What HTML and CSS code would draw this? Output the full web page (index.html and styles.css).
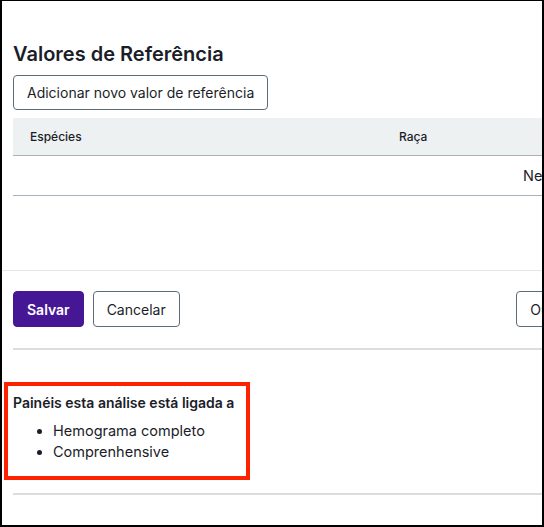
FILE: index.html
```html
<!DOCTYPE html>
<html lang="pt">
<head>
    <meta charset="UTF-8">
    <meta name="viewport" content="width=device-width, initial-scale=1.0">
    <title>Valores de Referência</title>
    <link rel="stylesheet" href="styles.css">
</head>
<body>
    <div class="frame">
        <div class="page">
            <section class="ref-values">
                <h2>Valores de Referência</h2>
                <button class="btn">Adicionar novo valor de referência</button>
                <table class="ref-table">
                    <thead>
                        <tr>
                            <th class="col-species">Espécies</th>
                            <th class="col-breed">Raça</th>
                            <th></th>
                        </tr>
                    </thead>
                    <tbody>
                        <tr>
                            <td colspan="3" class="empty">Nenhum valor de referência</td>
                        </tr>
                    </tbody>
                </table>
            </section>

            <div class="form-actions">
                <button class="btn btn-primary">Salvar</button>
                <button class="btn">Cancelar</button>
                <button class="btn btn-right">Outras ações</button>
            </div>

            <section class="panels">
                <h3>Painéis esta análise está ligada a</h3>
                <ul>
                    <li>Hemograma completo</li>
                    <li>Comprenhensive</li>
                </ul>
            </section>

            <!-- annotation box -->
            <div class="highlight"></div>
        </div>
    </div>
</body>
</html>
```

FILE: styles.css
```css
body, h2, h3, ul, li, button {
    margin: 0;
    padding: 0;
}

body {
    font-family: Inter, "Noto Sans", sans-serif;
    color: #1b1d29;
    background-color: #fff;
}

.frame {
    width: 544px;
    height: 527px;
    box-sizing: border-box;
    border: 2px solid #000;
    border-top-width: 1px;
    overflow: hidden;
}

.page {
    position: relative;
    width: 640px;
}

.ref-values {
    padding: 41px 0 0 11px;
    height: 228px;
}

h2 {
    font-size: 20px;
    line-height: 24px;
    font-weight: 600;
    margin-bottom: 9px;
}

.btn {
    font-family: inherit;
    font-size: 14px;
    color: #1b1d29;
    background-color: #fff;
    border: 1px solid #5e6b78;
    border-radius: 4px;
    height: 35px;
    padding: 0 13px;
    cursor: pointer;
}

.ref-table {
    width: 100%;
    border-collapse: collapse;
    margin-top: 8px;
}

.ref-table th {
    background-color: #eef1f2;
    height: 37px;
    font-size: 12px;
    font-weight: 500;
    text-align: left;
    padding: 0;
    border-bottom: 1px solid #a9b1b9;
}

.col-species {
    width: 369px;
    padding-left: 17px !important;
}

.col-breed {
    width: 140px;
}

.ref-table td {
    height: 39px;
    border-bottom: 1px solid #a9b1b9;
    font-size: 14.5px;
    padding: 0;
}

.empty {
    padding-left: 510px !important;
    white-space: nowrap;
}

.form-actions {
    display: flex;
    gap: 9px;
    padding: 20px 0 21px 11px;
    border-top: 1px solid #e6e6e6;
    margin-right: 10px;
}

.form-actions .btn {
    height: 36px;
}

.btn-primary {
    background-color: #461795;
    border-color: #461795;
    color: #fff;
    font-weight: 600;
}

.btn-right {
    margin-left: auto;
}

.panels {
    margin-left: 11px;
    padding: 43px 0 31px 0;
    border-top: 2px solid #dcdcdc;
    border-bottom: 2px solid #dcdcdc;
}

h3 {
    font-size: 14px;
    font-weight: 600;
    line-height: 20px;
    margin-bottom: 7px;
}

.panels ul {
    padding-left: 40px;
    font-size: 14.5px;
    line-height: 21px;
}

.highlight {
    position: absolute;
    left: 2px;
    top: 381px;
    width: 238px;
    height: 90px;
    border: 4px solid #ff2200;
}
```
